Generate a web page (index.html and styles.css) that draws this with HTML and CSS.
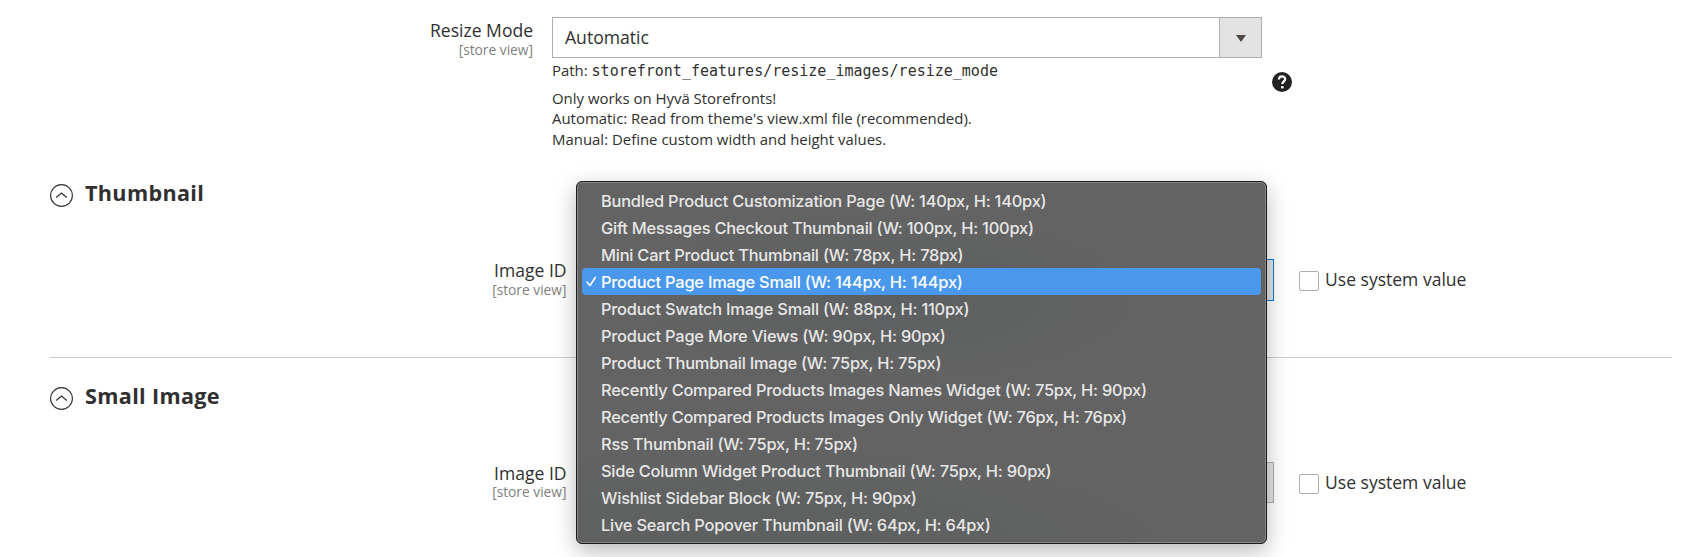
FILE: index.html
```html
<!DOCTYPE html>
<html lang="en">
<head>
<meta charset="utf-8">
<title>Configuration</title>
<link rel="stylesheet" href="styles.css">
</head>
<body>
<main class="config">
  <div class="field field-mode">
    <div class="label"><span class="label-name">Resize Mode</span><span class="scope">[store view]</span></div>
    <div class="control">
      <div class="select"><span class="select-value">Automatic</span><span class="select-button"><svg width="10" height="7" viewBox="0 0 10 7"><path d="M0 0h10L5 7z" fill="#514943"/></svg></span></div>
      <div class="note">
        <p class="path">Path: <code>storefront_features/resize_images/resize_mode</code></p>
        <p>Only works on Hyvä Storefronts!</p>
        <p>Automatic: Read from theme's view.xml file (recommended).</p>
        <p>Manual: Define custom width and height values.</p>
      </div>
    </div>
    <svg class="help" width="20" height="20" viewBox="0 0 20 20"><circle cx="10" cy="10" r="10" fill="#222"/><path d="M6.9 7.6C6.9 5.5 8.2 4.4 10 4.4s3.2 1 3.2 2.8c0 2.1-2.9 2.4-2.9 4.7" fill="none" stroke="#fff" stroke-width="2.2"/><rect x="9" y="13.9" width="2.6" height="2.6" rx=".8" fill="#fff"/></svg>
  </div>

  <section class="group">
    <h2 class="group-title"><svg width="23" height="23" viewBox="0 0 23 23" fill="none" stroke="#333"><circle cx="11.5" cy="11.5" r="10.9" stroke-width="1.1"/><path d="M6.2 13.4l5.3-4.3 5.3 4.3" stroke-width="1.3"/></svg><span>Thumbnail</span></h2>
    <div class="field field-image">
      <div class="label"><span class="label-name">Image ID</span><span class="scope">[store view]</span></div>
      <div class="control"><div class="select select-focus"><span class="select-value"></span><span class="select-button"></span></div></div>
      <label class="inherit"><span class="checkbox"></span><span class="inherit-text">Use system value</span></label>
    </div>
  </section>

  <section class="group group-second">
    <h2 class="group-title"><svg width="23" height="23" viewBox="0 0 23 23" fill="none" stroke="#333"><circle cx="11.5" cy="11.5" r="10.9" stroke-width="1.1"/><path d="M6.2 13.4l5.3-4.3 5.3 4.3" stroke-width="1.3"/></svg><span>Small Image</span></h2>
    <div class="field field-image">
      <div class="label"><span class="label-name">Image ID</span><span class="scope">[store view]</span></div>
      <div class="control"><div class="select"><span class="select-value"></span><span class="select-button"></span></div></div>
      <label class="inherit"><span class="checkbox"></span><span class="inherit-text">Use system value</span></label>
    </div>
  </section>
</main>

<ul class="menu">
  <li>Bundled Product Customization Page (W: 140px, H: 140px)</li>
  <li>Gift Messages Checkout Thumbnail (W: 100px, H: 100px)</li>
  <li>Mini Cart Product Thumbnail (W: 78px, H: 78px)</li>
  <li class="selected"><svg class="check" width="11" height="11" viewBox="0 0 11 11"><path d="M1.2 6.2l2.8 3.3L9.4 1.3" fill="none" stroke="#fff" stroke-width="1.6" stroke-linecap="round" stroke-linejoin="round"/></svg>Product Page Image Small (W: 144px, H: 144px)</li>
  <li>Product Swatch Image Small (W: 88px, H: 110px)</li>
  <li>Product Page More Views (W: 90px, H: 90px)</li>
  <li>Product Thumbnail Image (W: 75px, H: 75px)</li>
  <li>Recently Compared Products Images Names Widget (W: 75px, H: 90px)</li>
  <li>Recently Compared Products Images Only Widget (W: 76px, H: 76px)</li>
  <li>Rss Thumbnail (W: 75px, H: 75px)</li>
  <li>Side Column Widget Product Thumbnail (W: 75px, H: 90px)</li>
  <li>Wishlist Sidebar Block (W: 75px, H: 90px)</li>
  <li>Live Search Popover Thumbnail (W: 64px, H: 64px)</li>
</ul>
</body>
</html>
```
FILE: styles.css
```css
* { box-sizing: border-box; }
body { margin: 0; height: 557px; overflow: hidden; background: #fff; color: #303030; font-family: "Open Sans", sans-serif; }
p, h2, ul { margin: 0; padding: 0; }
svg { display: block; flex: none; }
.config { padding: 17px 16px 0 50px; }
.field { display: flex; align-items: flex-start; }
.label { display: flex; flex-direction: column; align-items: flex-end; flex: none; }
.label-name { font-size: 17.55px; line-height: 24px; }
.scope { font-size: 13.75px; line-height: 18px; margin-top: -1px; color: #808080; }
.control { width: 710px; flex: none; }
.select { display: flex; height: 41px; border: 1px solid #adadad; background: #fff; }
.select-value { flex: 1; padding-left: 12px; font-size: 17.6px; line-height: 38px; }
.select-button { width: 42px; border-left: 1px solid #adadad; background: #e3e3e3; display: flex; align-items: center; justify-content: center; padding-top: 2px; }
.select-focus { height: 42px; border-color: #007bdb; }

.field-mode { height: 147px; }
.field-mode .label { width: 483px; margin-right: 19px; padding-top: 1px; }
.note { font-size: 14.95px; line-height: 20.5px; white-space: nowrap; }
.path { padding-top: 2px; margin-bottom: 6px; }
code { font-family: "DejaVu Sans Mono", monospace; font-size: 15px; }
.help { margin: 55px 0 0 10px; }

.group { height: 194px; border-bottom: 1px solid #ccc; }
.group-second { border-bottom: 0; padding-top: 9px; }
.group-title { display: flex; align-items: flex-start; gap: 12px; height: 76px; padding-top: 20px; font-size: 21.6px; line-height: 22px; font-weight: 700; letter-spacing: .33px; }
.group-title span { margin-top: -2px; }
.field-image { padding-top: 19px; }
.field-image .label { width: 516.5px; margin: -1px 17.5px 0 0; }
.group-second .scope { margin-top: -2px; }
.field-image .control { width: 690px; }
.inherit { display: flex; align-items: flex-start; gap: 6px; margin: 12px 0 0 25px; }
.checkbox { width: 20px; height: 20px; border: 1px solid #adadad; border-radius: 2px; }
.inherit-text { font-size: 17.55px; line-height: 24px; margin-top: -4px; white-space: nowrap; }

.menu { position: absolute; left: 576px; top: 181px; width: 691px; height: 363px; padding: 5px; list-style: none; border: 1px solid #1c1c1c; border-radius: 6px; background: radial-gradient(ellipse 260px 90px at 45% 32%, #5c5f60, transparent), radial-gradient(ellipse 440px 100px at 25% 100%, #5c605f, transparent), #636363; box-shadow: inset 0 0 0 1px #868686, 0 7px 22px rgba(0,0,0,.28); font-family: Inter, sans-serif; font-size: 16.4px; font-weight: 500; letter-spacing: -.22px; color: #e7e7e7; }
.menu li { position: relative; height: 27px; line-height: 29px; padding-left: 19px; white-space: nowrap; }
.menu .selected { background: #4a98eb; border-radius: 4px; color: #fff; }
.check { position: absolute; left: 4px; top: 8px; }
```
